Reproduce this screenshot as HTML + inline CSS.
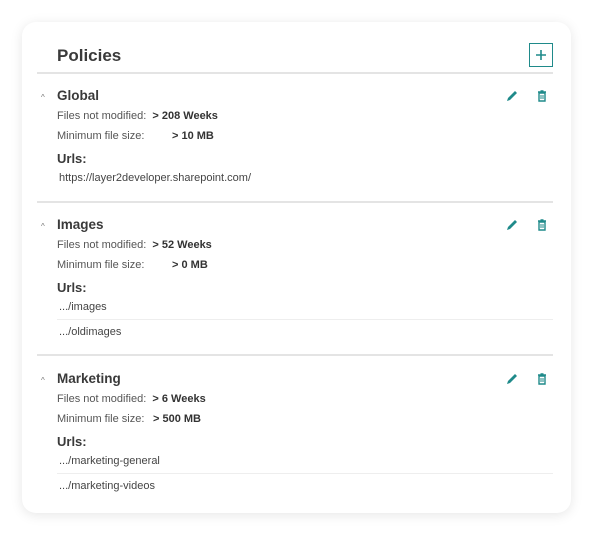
<!DOCTYPE html>
<html><head><style>
body{margin:0;width:600px;height:542px;background:#fff;font-family:"Liberation Sans",sans-serif;color:#333;position:relative;overflow:hidden}
.card{position:absolute;left:22px;top:22px;width:549px;height:491px;border-radius:14px;background:#fff;box-shadow:0 2px 12px rgba(0,0,0,.10)}
.t{position:absolute;white-space:nowrap;line-height:1}
.h{font-size:13.5px;font-weight:bold;color:#3a3a3a}
.d{font-size:11px;color:#555}
.b{font-weight:bold;color:#333}
.u{font-size:13px;font-weight:bold;color:#3a3a3a}
.l{font-size:11px;color:#444}
.div{position:absolute;left:37px;width:516px;height:2px;background:#e4e4e4}
.sep{position:absolute;left:57px;width:496px;height:1px;background:#eee}
.chev{position:absolute;font-size:8px;color:#777}
svg{position:absolute}
</style></head><body>
<div class="card"></div>
<div class="t" style="left:57px;top:47px;font-size:17px;font-weight:bold;color:#3a3a3a">Policies</div>
<div style="position:absolute;left:529px;top:43px;width:22px;height:22px;border:1.5px solid #1f8a8a"></div>
<svg style="left:534px;top:48px" width="14" height="14"><path d="M7 2v10M2 7h10" stroke="#1f8a8a" stroke-width="1.6"/></svg>
<div class="div" style="top:72px"></div>

<div class="chev" style="left:41px;top:93px">^</div>
<div class="t h" style="left:57px;top:89px">Global</div>
<div class="t d" style="left:57px;top:111px">Files not modified:&nbsp; <span class="b">&gt; 208 Weeks</span></div>
<div class="t d" style="left:57px;top:131px">Minimum file size:</div><div class="t d b" style="left:172px;top:131px">&gt; 10 MB</div>
<div class="t u" style="left:57px;top:152px">Urls:</div>
<div class="t l" style="left:59px;top:173px">https://layer2developer.sharepoint.com/</div>
<div class="div" style="top:201px"></div>

<div class="chev" style="left:41px;top:222px">^</div>
<div class="t h" style="left:57px;top:218px">Images</div>
<div class="t d" style="left:57px;top:240px">Files not modified:&nbsp; <span class="b">&gt; 52 Weeks</span></div>
<div class="t d" style="left:57px;top:260px">Minimum file size:</div><div class="t d b" style="left:172px;top:260px">&gt; 0 MB</div>
<div class="t u" style="left:57px;top:281px">Urls:</div>
<div class="t l" style="left:59px;top:302px">.../images</div>
<div class="sep" style="top:319px"></div>
<div class="t l" style="left:59px;top:327px">.../oldimages</div>
<div class="div" style="top:354px"></div>

<div class="chev" style="left:41px;top:376px">^</div>
<div class="t h" style="left:57px;top:372px">Marketing</div>
<div class="t d" style="left:57px;top:394px">Files not modified:&nbsp; <span class="b">&gt; 6 Weeks</span></div>
<div class="t d" style="left:57px;top:414px">Minimum file size:</div><div class="t d b" style="left:153px;top:414px">&gt; 500 MB</div>
<div class="t u" style="left:57px;top:435px">Urls:</div>
<div class="t l" style="left:59px;top:456px">.../marketing-general</div>
<div class="sep" style="top:473px"></div>
<div class="t l" style="left:59px;top:481px">.../marketing-videos</div>

<svg style="left:505px;top:89px" width="14" height="14"><path d="M2 12l1-3 7-7 2 2-7 7z" fill="#1f8a8a"/></svg>
<svg style="left:536px;top:90px" width="12" height="12"><path d="M2 2h8M4.5 1h3M3 3h6v8H3z" fill="none" stroke="#1f8a8a" stroke-width="1.4"/><path d="M5 5v4M7 5v4" stroke="#1f8a8a" stroke-width="1"/></svg>
<svg style="left:505px;top:218px" width="14" height="14"><path d="M2 12l1-3 7-7 2 2-7 7z" fill="#1f8a8a"/></svg>
<svg style="left:536px;top:219px" width="12" height="12"><path d="M2 2h8M4.5 1h3M3 3h6v8H3z" fill="none" stroke="#1f8a8a" stroke-width="1.4"/><path d="M5 5v4M7 5v4" stroke="#1f8a8a" stroke-width="1"/></svg>
<svg style="left:505px;top:372px" width="14" height="14"><path d="M2 12l1-3 7-7 2 2-7 7z" fill="#1f8a8a"/></svg>
<svg style="left:536px;top:373px" width="12" height="12"><path d="M2 2h8M4.5 1h3M3 3h6v8H3z" fill="none" stroke="#1f8a8a" stroke-width="1.4"/><path d="M5 5v4M7 5v4" stroke="#1f8a8a" stroke-width="1"/></svg>
</body></html>
